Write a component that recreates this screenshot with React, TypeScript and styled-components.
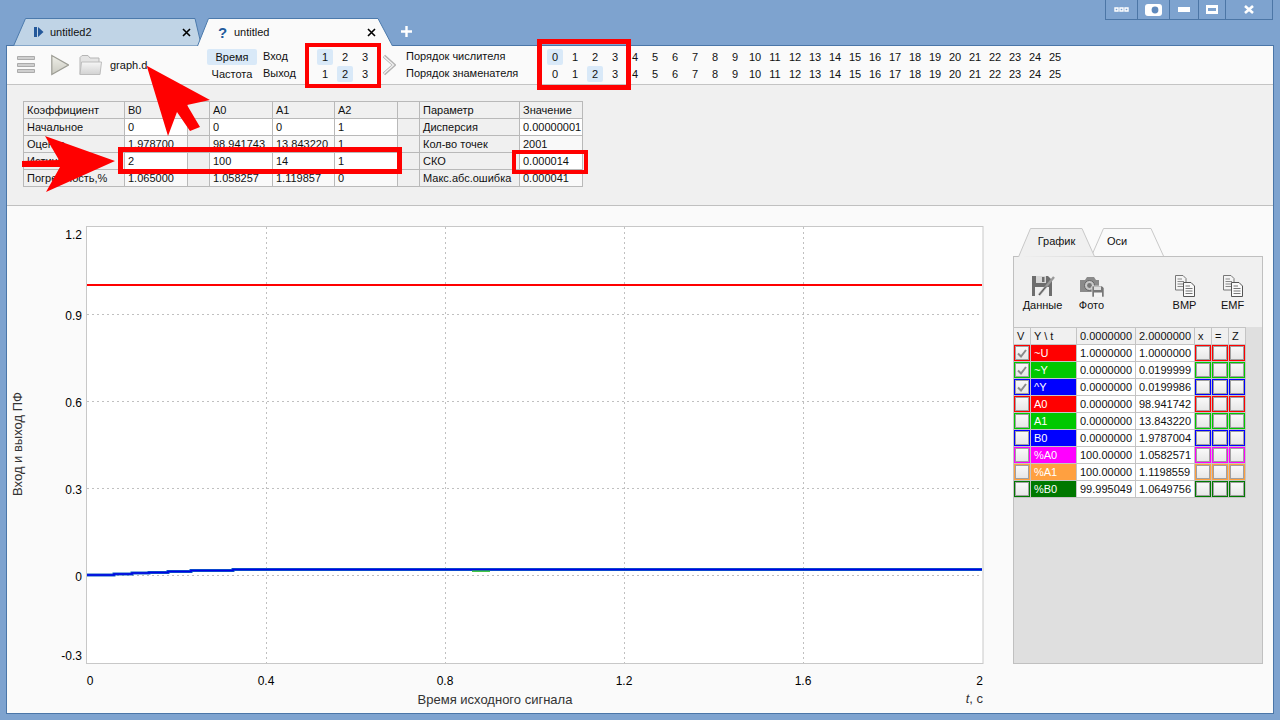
import React from "react";
import styled, { createGlobalStyle } from "styled-components";

const GlobalStyle = createGlobalStyle`
  html, body {
    margin: 0;
    padding: 0;
    overflow: hidden;
  }
  body {
    font-family: "Liberation Sans", Arial, sans-serif;
    font-size: 11px;
    color: #111;
  }
`;

const Window = styled.div`
  position: relative;
  width: 1280px;
  height: 720px;
  box-sizing: border-box;
  padding: 0 6px 6px;
  display: flex;
  flex-direction: column;
  background: #7ea3cf;
  overflow: hidden;
`;

const TitleRow = styled.div`
  position: relative;
  z-index: 1;
  height: 45px;
  flex: none;
  display: flex;
  align-items: flex-end;
`;

const TabStrip = styled.div`
  display: flex;
  align-items: flex-end;
  margin-left: 7px;
`;

const Tab = styled.div<{ $active?: boolean }>`
  position: relative;
  box-sizing: border-box;
  height: 28px;
  width: ${p => (p.$active ? 196 : 189)}px;
  margin-left: ${p => (p.$active ? -5 : 0)}px;
  margin-bottom: -1px;
  z-index: ${p => (p.$active ? 2 : 1)};
  display: flex;
  align-items: center;
  padding-left: 21px;
  padding-right: ${p => (p.$active ? 17 : 11)}px;
  font-size: 11px;
`;

const TabBack = styled.svg`
  position: absolute;
  left: 0;
  top: 0;
  width: 100%;
  height: 100%;
`;

const TabIcon = styled.span`
  position: relative;
  width: 15px;
  flex: none;
  display: flex;
  align-items: center;
`;

const QuestionMark = styled.span`
  font-size: 15px;
  font-weight: bold;
  color: #1f5a9c;
  line-height: 1;
`;

const TabLabel = styled.span`
  position: relative;
  flex: 1;
  margin-left: 1px;
`;

const CloseBox = styled.svg`
  position: relative;
  width: 9px;
  height: 9px;
  flex: none;
`;

const AddTab = styled.svg`
  width: 13px;
  height: 13px;
  margin: 0 0 7px 7px;
  flex: none;
`;

const Controls = styled.div`
  margin-left: auto;
  margin-right: 1px;
  align-self: flex-start;
  display: flex;
  height: 19px;
  border: 1px solid #4c76a6;
  border-top: none;
`;

const ControlButton = styled.div<{ $w: number }>`
  width: ${p => p.$w}px;
  box-sizing: border-box;
  display: flex;
  align-items: center;
  justify-content: center;
  border-left: 1px solid #4c76a6;
  &:first-child {
    border-left: none;
  }
`;

const Content = styled.div`
  flex: 1;
  min-height: 0;
  display: flex;
  flex-direction: column;
  border: 1px solid #4a76a8;
  background: #fafafa;
`;

const Toolbar = styled.div`
  height: 39px;
  flex: none;
  box-sizing: border-box;
  display: flex;
  align-items: center;
  padding-left: 10px;
  border-bottom: 1px solid #c4c4c4;
  background: #fafafa;
`;

const ToolIcon = styled.svg<{ $w: number; $ml?: number }>`
  width: ${p => p.$w}px;
  height: 22px;
  flex: none;
  margin-left: ${p => p.$ml || 0}px;
`;

const FileName = styled.span`
  width: 97px;
  margin-left: 8px;
  flex: none;
`;

const PickerColumn = styled.div<{ $w: number; $ml?: number }>`
  width: ${p => p.$w}px;
  margin-left: ${p => p.$ml || 0}px;
  flex: none;
  display: grid;
  grid-auto-rows: 17px;
`;

const ModeLabel = styled.div<{ $on?: boolean }>`
  height: 16px;
  align-self: center;
  line-height: 16px;
  text-align: center;
  border-radius: 2px;
  background: ${p => (p.$on ? "#d9e9f8" : "transparent")};
`;

const PlainLabel = styled.div`
  line-height: 17px;
  white-space: nowrap;
`;

const NumberRow = styled.div`
  display: flex;
`;

const NumberCell = styled.div<{ $on?: boolean }>`
  width: 16px;
  height: 16px;
  margin: 0 2px;
  align-self: center;
  line-height: 16px;
  text-align: center;
  border-radius: 2px;
  background: ${p => (p.$on ? "#d9e9f8" : "transparent")};
`;

const ParamsPanel = styled.div`
  height: 121px;
  flex: none;
  box-sizing: border-box;
  padding: 16px 16px 0;
  background: #f0f0f0;
  border-bottom: 1px solid #c0c0c0;
`;

const GridTable = styled.table<{ $w: number }>`
  border-collapse: collapse;
  table-layout: fixed;
  width: ${p => p.$w}px;
  font-size: 11px;
`;

const SeriesTable = styled(GridTable)`
  margin-left: -1px;
`;

const Col = styled.col<{ $w: number }>`
  width: ${p => p.$w}px;
`;

const ParamCell = styled.td<{ $tone: string }>`
  height: 17px;
  box-sizing: border-box;
  padding: 0 3px;
  line-height: 15px;
  border: 1px solid #b9b9b9;
  white-space: nowrap;
  overflow: hidden;
  background: ${p => p.$tone};
`;

const Workspace = styled.div`
  flex: 1;
  min-height: 0;
  display: flex;
  align-items: flex-start;
`;

const ChartBox = styled.svg`
  width: 1006px;
  height: 507px;
  flex: none;
  font-family: "Liberation Sans", Arial, sans-serif;
  font-size: 12px;
`;

const SideColumn = styled.div`
  width: 250px;
  flex: none;
  margin-top: 22px;
`;

const SideTabs = styled.div`
  display: flex;
  height: 28px;
  padding-left: 5px;
`;

const SideTab = styled.div<{ $w: number; $active?: boolean }>`
  position: relative;
  width: ${p => p.$w}px;
  height: 29px;
  margin-left: ${p => (p.$active ? 0 : -4)}px;
  z-index: ${p => (p.$active ? 2 : 1)};
  display: flex;
  align-items: center;
  justify-content: center;
  padding-bottom: 3px;
  padding-right: ${p => (p.$active ? 0 : 22)}px;
  box-sizing: border-box;
`;

const SideTabLabel = styled.span`
  position: relative;
`;

const SideBody = styled.div`
  height: 408px;
  box-sizing: border-box;
  border: 1px solid #c0c0c0;
  background: #dfdfdf;
`;

const SideTools = styled.div`
  height: 70px;
  box-sizing: border-box;
  padding: 17px 0 0 4px;
  display: flex;
  background: #f0f0f0;
`;

const ToolButton = styled.div`
  width: 49px;
  flex: none;
  display: flex;
  flex-direction: column;
  align-items: center;
  gap: 1px;
  font-size: 11px;
  &:nth-child(3) {
    margin-left: 44px;
  }
  &:nth-child(4) {
    margin-left: -1px;
  }
`;

const ToolPicture = styled.svg`
  width: 26px;
  height: 24px;
`;

const ValueCell = styled.td<{ $bg?: string; $fg?: string }>`
  height: 17px;
  box-sizing: border-box;
  padding: 0 0 0 3px;
  line-height: 15px;
  border: 1px solid #c4c4c4;
  white-space: nowrap;
  overflow: hidden;
  background: ${p => p.$bg || "#fff"};
  color: ${p => p.$fg || "#111"};
`;

const BoxCell = styled.td`
  height: 17px;
  box-sizing: border-box;
  padding: 0;
  border: 1px solid #c4c4c4;
  background: #f0f0f0;
`;

const CheckBox = styled.div<{ $color: string }>`
  width: 16px;
  height: 16px;
  box-sizing: border-box;
  border: 1px solid ${p => p.$color};
  box-shadow: inset 0 0 0 1px #a0a0a0;
  background: linear-gradient(#fafafa, #e6e6e6);
  display: flex;
  align-items: center;
  justify-content: center;
`;

const Frame = styled.div<{ $x: number; $y: number; $w: number; $h: number; $b: number }>`
  position: absolute;
  left: ${p => p.$x}px;
  top: ${p => p.$y}px;
  width: ${p => p.$w}px;
  height: ${p => p.$h}px;
  box-sizing: border-box;
  border: ${p => p.$b}px solid #ff0000;
  z-index: 3;
`;

const ArrowLayer = styled.svg`
  position: absolute;
  left: 0;
  top: 0;
  width: 1280px;
  height: 720px;
  z-index: 4;
`;

const paramRows: [string[], string][] = [
  [["Коэффициент", "B0", "", "A0", "A1", "A2", "", "Параметр", "Значение"], "#f0f0f0"],
  [["Начальное", "0", "", "0", "0", "1", "", "Дисперсия", "0.00000001"], "#ffffff"],
  [["Оценка", "1.978700", "", "98.941743", "13.843220", "1", "", "Кол-во точек", "2001"], "#f9f9f9"],
  [["Истинное", "2", "", "100", "14", "1", "", "СКО", "0.000014"], "#ffffff"],
  [["Погрешность,%", "1.065000", "", "1.058257", "1.119857", "0", "", "Макс.абс.ошибка", "0.000041"], "#f9f9f9"],
];

const seriesRows = [
  { name: "~U", color: "#ff0000", a: "1.0000000", b: "1.0000000", checked: true },
  { name: "~Y", color: "#00c800", a: "0.0000000", b: "0.0199999", checked: true },
  { name: "^Y", color: "#0000ff", a: "0.0000000", b: "0.0199986", checked: true },
  { name: "A0", color: "#ff0000", a: "0.0000000", b: "98.941742" },
  { name: "A1", color: "#00c800", a: "0.0000000", b: "13.843220" },
  { name: "B0", color: "#0000ff", a: "0.0000000", b: "1.9787004" },
  { name: "%A0", color: "#ff00ff", a: "100.00000", b: "1.0582571" },
  { name: "%A1", color: "#ffa040", a: "100.00000", b: "1.1198559" },
  { name: "%B0", color: "#007800", a: "99.995049", b: "1.0649756" },
];

const stepLine =
  "M87 575H114V574H132V573H149V572.5H168V571.5H191V570.5H233V569.5H982";

const Numbers = ({ from, to, on }: { from: number; to: number; on: number }) => (
  <NumberRow>
    {Array.from({ length: to - from + 1 }, (_, i) => (
      <NumberCell key={i} $on={from + i === on}>
        {from + i}
      </NumberCell>
    ))}
  </NumberRow>
);

const Close = () => (
  <CloseBox viewBox="0 0 9 9">
    <path d="M1 1L8 8M8 1L1 8" stroke="#000" strokeWidth="1.6" fill="none" />
  </CloseBox>
);

const DocsIcon = () => (
  <ToolPicture viewBox="0 0 26 24">
    <path d="M3.5 1.5H11L14 4.5V16H3.5Z" fill="#f4f4f4" stroke="#777" />
    <path d="M5.5 5H10M5.5 7.5H12M5.5 10H12M5.5 12.5H12" stroke="#888" />
    <path d="M11.5 8.5H19L22.5 12V22.5H11.5Z" fill="#fafafa" stroke="#555" />
    <path d="M13.5 12H18M13.5 14.5H20.5M13.5 17H20.5M13.5 19.5H20.5" stroke="#777" />
  </ToolPicture>
);

export default function App() {
  return (
    <Window>
      <GlobalStyle />
      <TitleRow>
        <TabStrip>
          <Tab>
            <TabBack viewBox="0 0 189 28">
              <path d="M0.5 28L12.5 0.5H182L188.5 28Z" fill="#c0d4e6" stroke="#4c7aac" />
            </TabBack>
            <TabIcon>
              <svg width="10" height="10" viewBox="0 0 10 10">
                <path d="M0 0H3V10H0ZM4 0L9.5 5L4 10Z" fill="#24589a" />
              </svg>
            </TabIcon>
            <TabLabel>untitled2</TabLabel>
            <Close />
          </Tab>
          <Tab $active>
            <TabBack viewBox="0 0 196 28">
              <path d="M0.5 28L11.5 0.5H181L195.5 28" fill="#fafafa" stroke="#4c7aac" />
            </TabBack>
            <TabIcon>
              <QuestionMark>?</QuestionMark>
            </TabIcon>
            <TabLabel>untitled</TabLabel>
            <Close />
          </Tab>
        </TabStrip>
        <AddTab viewBox="0 0 13 13">
          <path d="M6.5 1V12M1 6.5H12" stroke="#fff" strokeWidth="2.4" />
        </AddTab>
        <Controls>
          <ControlButton $w={31}>
            <svg width="16" height="6" viewBox="0 0 16 6">
              <path d="M1 1h3v3H1zM6 1h3v3H6zM11 1h3v3h-3z" fill="#7ea3cf" stroke="#fff" strokeWidth="1.4" />
            </svg>
          </ControlButton>
          <ControlButton $w={32}>
            <svg width="17" height="12" viewBox="0 0 17 12">
              <rect width="17" height="12" rx="3" fill="#fff" />
              <circle cx="10" cy="6" r="3.4" fill="#5f8abd" />
            </svg>
          </ControlButton>
          <ControlButton $w={29}>
            <svg width="12" height="5" viewBox="0 0 12 5">
              <rect width="12" height="5" fill="#fff" />
            </svg>
          </ControlButton>
          <ControlButton $w={27}>
            <svg width="12" height="9" viewBox="0 0 12 9">
              <path d="M0 0H12V9H0ZM2 3V6H10V3Z" fill="#fff" fillRule="evenodd" />
            </svg>
          </ControlButton>
          <ControlButton $w={47}>
            <svg width="10" height="9" viewBox="0 0 10 9">
              <path d="M1 1L9 8M9 1L1 8" stroke="#fff" strokeWidth="2.6" />
            </svg>
          </ControlButton>
        </Controls>
      </TitleRow>

      <Content>
        <Toolbar>
          <ToolIcon $w={18} viewBox="0 0 18 22">
            <path
              d="M0.5 2.5H17.5V5.5H0.5ZM0.5 9.5H17.5V12.5H0.5ZM0.5 15.5H17.5V18.5H0.5Z"
              fill="#cfcfcf"
              stroke="#ababab"
            />
          </ToolIcon>
          <ToolIcon $w={18} $ml={16} viewBox="0 0 18 22">
            <defs>
              <linearGradient id="playFill" x1="0" y1="0" x2="0" y2="1">
                <stop offset="0" stopColor="#efefe8" />
                <stop offset="1" stopColor="#c9c9c0" />
              </linearGradient>
            </defs>
            <path d="M0.8 1.5L17.5 11L0.8 20.5Z" fill="url(#playFill)" stroke="#9c9c94" strokeWidth="1.2" />
          </ToolIcon>
          <ToolIcon $w={23} $ml={10} viewBox="0 0 23 22">
            <defs>
              <linearGradient id="folderFill" x1="0" y1="0" x2="0" y2="1">
                <stop offset="0" stopColor="#f6f6f6" />
                <stop offset="1" stopColor="#d2d2d2" />
              </linearGradient>
            </defs>
            <path d="M1 20.5V3.5L3 1.5H9L11 4H20V20.5Z" fill="#e4e4e4" stroke="#b5b5b5" />
            <path d="M1 20.5L2.5 8H22.5L21 20.5Z" fill="url(#folderFill)" stroke="#bdbdbd" />
          </ToolIcon>
          <FileName>graph.d</FileName>
          <PickerColumn $w={50}>
            <ModeLabel $on>Время</ModeLabel>
            <ModeLabel>Частота</ModeLabel>
          </PickerColumn>
          <PickerColumn $w={52} $ml={6}>
            <PlainLabel>Вход</PlainLabel>
            <PlainLabel>Выход</PlainLabel>
          </PickerColumn>
          <PickerColumn $w={60}>
            <Numbers from={1} to={3} on={1} />
            <Numbers from={1} to={3} on={2} />
          </PickerColumn>
          <ToolIcon $w={13} $ml={8} viewBox="0 0 13 22">
            <path d="M1 2L11 11L1 20" fill="none" stroke="#b4b4b4" strokeWidth="3.4" />
            <path d="M1 2.5L10.5 11L1 19.5" fill="none" stroke="#f4f4f4" strokeWidth="1.2" />
          </ToolIcon>
          <PickerColumn $w={139} $ml={10}>
            <PlainLabel>Порядок числителя</PlainLabel>
            <PlainLabel>Порядок знаменателя</PlainLabel>
          </PickerColumn>
          <PickerColumn $w={520}>
            <Numbers from={0} to={25} on={0} />
            <Numbers from={0} to={25} on={2} />
          </PickerColumn>
        </Toolbar>

        <ParamsPanel>
          <GridTable $w={560}>
            <colgroup>
              {[101, 63, 22, 63, 62, 63, 22, 100, 63].map((w, i) => (
                <Col key={i} $w={w} />
              ))}
            </colgroup>
            <tbody>
              {paramRows.map(([cells, tone], r) => (
                <tr key={r}>
                  {cells.map((text, c) => (
                    <ParamCell key={c} $tone={c === 0 || c === 2 || c === 6 || c === 7 ? "#f0f0f0" : tone}>
                      {text}
                    </ParamCell>
                  ))}
                </tr>
              ))}
            </tbody>
          </GridTable>
        </ParamsPanel>

        <Workspace>
          <ChartBox viewBox="7 206 1006 507">
            <rect x="86.5" y="226.5" width="896.5" height="437" fill="#fff" stroke="#c8c8c8" />
            <g stroke="#c0c0c0" strokeDasharray="2 3" fill="none">
              {[314.5, 401.5, 488.5, 575.5].map(y => (
                <path key={y} d={`M87 ${y}H982`} />
              ))}
              {[266.5, 445.5, 624.5, 803.5].map(x => (
                <path key={x} d={`M${x} 227V663`} />
              ))}
            </g>
            <path d="M87 285H982" stroke="#ff0000" strokeWidth="2" />
            <path d={stepLine} stroke="#1060c4" strokeWidth="3" fill="none" />
            <path d={stepLine} stroke="#0000e6" strokeWidth="1.4" fill="none" />
            <path d="M472 571.2H490" stroke="#30c030" strokeWidth="1.4" />
            <g fill="#000" textAnchor="end">
              <text x="82" y="239">1.2</text>
              <text x="82" y="320">0.9</text>
              <text x="82" y="407">0.6</text>
              <text x="82" y="494">0.3</text>
              <text x="82" y="581">0</text>
              <text x="82" y="660">-0.3</text>
            </g>
            <g fill="#000" textAnchor="middle">
              <text x="90" y="685">0</text>
              <text x="266" y="685">0.4</text>
              <text x="445" y="685">0.8</text>
              <text x="624" y="685">1.2</text>
              <text x="803" y="685">1.6</text>
            </g>
            <text x="983" y="685" textAnchor="end" fill="#000">2</text>
            <g fontSize="13" fill="#333">
              <text x="495" y="704" textAnchor="middle">Время исходного сигнала</text>
              <text x="983" y="703" textAnchor="end">
                <tspan fontStyle="italic">t</tspan>, с
              </text>
              <text transform="translate(22 444) rotate(-90)" textAnchor="middle">
                Вход и выход ПФ
              </text>
            </g>
          </ChartBox>

          <SideColumn>
            <SideTabs>
              <SideTab $w={77} $active>
                <TabBack viewBox="0 0 77 29">
                  <path d="M0.5 29L12.5 0.5H64L76.5 28.5" fill="#f0f0f0" stroke="#c8c8c8" />
                </TabBack>
                <SideTabLabel>График</SideTabLabel>
              </SideTab>
              <SideTab $w={74}>
                <TabBack viewBox="0 0 74 29">
                  <path d="M0.5 28L12.5 0.5H60L72.5 28" fill="#fafafa" stroke="#c8c8c8" />
                </TabBack>
                <SideTabLabel>Оси</SideTabLabel>
              </SideTab>
            </SideTabs>
            <SideBody>
              <SideTools>
                <ToolButton>
                  <ToolPicture viewBox="0 0 26 24">
                    <path d="M2 2H18L22 6V22H2Z" fill="#6e6e6e" />
                    <path d="M6 2H16V9H6Z" fill="#d8d8d8" />
                    <path d="M12 3H14.5V8H12Z" fill="#6e6e6e" />
                    <path d="M5 13H19V22H5Z" fill="#efefef" />
                    <path d="M9 21L24 3" stroke="#9a9a9a" strokeWidth="2.4" />
                    <path d="M9 21L16 12.5" stroke="#555" strokeWidth="1" />
                  </ToolPicture>
                  Данные
                </ToolButton>
                <ToolButton>
                  <ToolPicture viewBox="0 0 26 24">
                    <path d="M1 6H6L8 3H15L17 6H20V18H1Z" fill="#8a8a8a" />
                    <circle cx="10.5" cy="11.5" r="5" fill="#c8c8c8" stroke="#666" />
                    <circle cx="10.5" cy="11.5" r="2.4" fill="#777" />
                    <path d="M13 12H23L25 14V23H13Z" fill="#777" stroke="#eee" strokeWidth="0.6" />
                    <path d="M15 12.5H22V16H15Z" fill="#ddd" />
                    <path d="M15 18.5H23V23H15Z" fill="#f4f4f4" />
                  </ToolPicture>
                  Фото
                </ToolButton>
                <ToolButton>
                  <DocsIcon />
                  BMP
                </ToolButton>
                <ToolButton>
                  <DocsIcon />
                  EMF
                </ToolButton>
              </SideTools>
              <SeriesTable $w={233}>
                <colgroup>
                  {[17, 46, 59, 59, 17, 17, 17].map((w, i) => (
                    <Col key={i} $w={w} />
                  ))}
                </colgroup>
                <tbody>
                  <tr>
                    {["V", "Y \\ t", "0.0000000", "2.0000000", "x", "=", "Z"].map((h, i) => (
                      <ValueCell key={i} $bg="#f0f0f0">
                        {h}
                      </ValueCell>
                    ))}
                  </tr>
                  {seriesRows.map(row => (
                    <tr key={row.name}>
                      <BoxCell>
                        <CheckBox $color={row.color}>
                          {row.checked && (
                            <svg width="10" height="9" viewBox="0 0 10 9">
                              <path d="M1 4.5L4 7.5L9 1" stroke="#8a8a8a" strokeWidth="2" fill="none" />
                            </svg>
                          )}
                        </CheckBox>
                      </BoxCell>
                      <ValueCell $bg={row.color} $fg="#fff">
                        {row.name}
                      </ValueCell>
                      <ValueCell>{row.a}</ValueCell>
                      <ValueCell>{row.b}</ValueCell>
                      {[0, 1, 2].map(k => (
                        <BoxCell key={k}>
                          <CheckBox $color={row.color} />
                        </BoxCell>
                      ))}
                    </tr>
                  ))}
                </tbody>
              </SeriesTable>
            </SideBody>
          </SideColumn>
        </Workspace>
      </Content>

      <Frame $x={305} $y={43} $w={76} $h={45} $b={4} />
      <Frame $x={537} $y={39} $w={94} $h={51} $b={5} />
      <Frame $x={118} $y={147} $w={284} $h={27} $b={5} />
      <Frame $x={512} $y={150} $w={76} $h={24} $b={4} />
      <ArrowLayer viewBox="0 0 1280 720">
        <polygon points="146.7,65.7 210,100 187,105 200,127 190,131 177,112 168,136" fill="#ff0000" />
        <polygon points="115,161 45,136 59,160 22,161 22,167 60,167 46,192" fill="#ff0000" />
      </ArrowLayer>
    </Window>
  );
}
